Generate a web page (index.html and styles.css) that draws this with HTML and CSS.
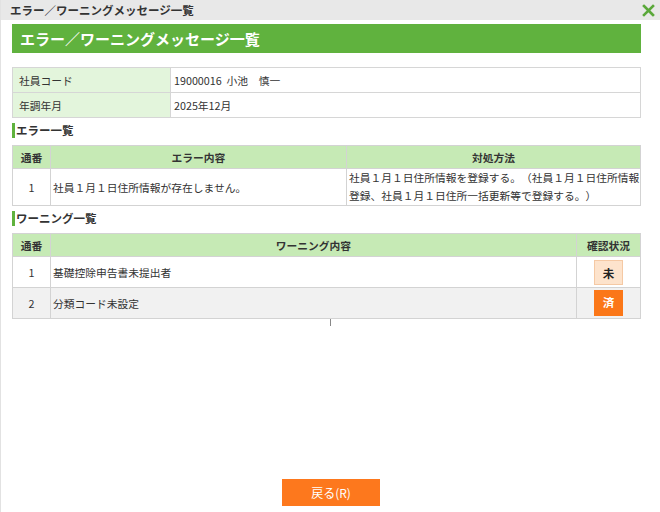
FILE: index.html
```html
<!DOCTYPE html>
<html lang="ja">
<head>
<meta charset="utf-8">
<title>エラー／ワーニングメッセージ一覧</title>
<link rel="stylesheet" href="styles.css">
</head>
<body>
<div class="window">
  <div class="titlebar">
    <span class="title">エラー／ワーニングメッセージ一覧</span>
    <svg class="close" width="13" height="13" viewBox="0 0 13 13"><path d="M2 2 L11 11 M11 2 L2 11" stroke="#5aa83a" stroke-width="2.6" stroke-linecap="square"/></svg>
  </div>
  <div class="content">
    <div class="pagehead">エラー／ワーニングメッセージ一覧</div>
    <table class="info">
      <tr><th>社員コード</th><td>19000016&nbsp;&nbsp;小池　慎一</td></tr>
      <tr><th>年調年月</th><td>2025年12月</td></tr>
    </table>
    <div class="section">エラー一覧</div>
    <table class="grid err">
      <colgroup><col class="c1"><col class="c2"><col></colgroup>
      <tr><th>通番</th><th>エラー内容</th><th>対処方法</th></tr>
      <tr class="r-err"><td class="num">1</td><td>社員１月１日住所情報が存在しません。</td><td class="fix">社員１月１日住所情報を登録する。（社員１月１日住所情報<br>登録、社員１月１日住所一括更新等で登録する。）</td></tr>
    </table>
    <div class="section">ワーニング一覧</div>
    <table class="grid warn">
      <colgroup><col class="c1"><col><col class="c3"></colgroup>
      <tr><th>通番</th><th>ワーニング内容</th><th>確認状況</th></tr>
      <tr class="r-w"><td class="num">1</td><td>基礎控除申告書未提出者</td><td class="st"><span class="badge mi">未</span></td></tr>
      <tr class="r-w alt"><td class="num">2</td><td>分類コード未設定</td><td class="st"><span class="badge zumi">済</span></td></tr>
    </table>
    <div class="tick"></div>
  </div>
  <div class="footer"><button class="back">戻る(R)</button></div>
</div>
</body>
</html>
```
FILE: styles.css
```css
html, body {
  margin: 0;
  padding: 0;
  background: #fff;
}
body {
  font-family: "Noto Sans CJK JP", "Noto Sans", sans-serif;
  font-size: 10.75px;
  color: #333;
  text-spacing-trim: space-all;
}
.window {
  width: 660px;
  height: 512px;
  box-sizing: border-box;
  border-left: 1px solid #e2e2e2;
  display: flex;
  flex-direction: column;
}
.titlebar {
  height: 20px;
  background: #e8e8e8;
  display: flex;
  align-items: center;
  justify-content: space-between;
  padding: 0 5px 0 9px;
  flex-shrink: 0;
}
.title {
  font-weight: bold;
  font-size: 11.5px;
  color: #333;
  line-height: 20px;
}
.close { display: block; }
.content {
  padding: 4px 0 0 11px;
  width: 629px;
}
.pagehead {
  height: 29px;
  background: #60b23e;
  color: #fff;
  font-weight: bold;
  font-size: 15px;
  line-height: 29px;
  padding-left: 8px;
}
table {
  border-collapse: collapse;
  width: 629px;
  table-layout: fixed;
}
.info {
  margin-top: 14px;
}
.info th, .info td {
  border: 1px solid #d6d6d6;
  height: 24px;
  padding: 0 3px;
  text-align: left;
  font-weight: normal;
}
.info th {
  width: 148px;
  padding-left: 6px;
  background: #e3f5dc;
}
.section {
  margin-top: 5px;
  height: 15px;
  line-height: 15px;
  border-left: 3px solid #5fb23d;
  padding-left: 1px;
  font-weight: bold;
  font-size: 11.5px;
}
.grid { margin-top: 7px; }
.grid th, .grid td {
  border: 1px solid #d3d3d3;
  padding: 0 2px;
}
.grid th {
  background: #c6eab5;
  height: 22px;
  font-weight: bold;
  text-align: center;
}
.grid col.c1 { width: 38px; }
.err col.c2 { width: 296px; }
.warn col.c3 { width: 64px; }
.num { text-align: center; }
.r-err td { height: 36px; }
.fix { line-height: 18px; padding: 0 1px; white-space: nowrap; }
.r-w td { height: 30px; }
.r-w.alt td { background: #f1f1f1; }
.st { text-align: center; }
.badge {
  display: inline-block;
  width: 29px;
  height: 25px;
  line-height: 25px;
  box-sizing: border-box;
  font-weight: bold;
  font-size: 11.5px;
  vertical-align: middle;
}
.badge.mi {
  background: #fde3cc;
  border: 1px solid #f5c9a4;
  color: #222;
}
.badge.zumi {
  background: #fb7718;
  color: #fff;
  height: 26px;
}
.tick {
  width: 1px;
  height: 7px;
  background: #888;
  margin-left: 318px;
}
.footer {
  margin-top: auto;
  padding-bottom: 6px;
  display: flex;
  justify-content: center;
}
.back {
  width: 98px;
  height: 27px;
  border: none;
  background: #fd781d;
  color: #fff;
  font-family: "Noto Sans CJK JP", "Noto Sans", sans-serif;
  font-size: 12px;
  padding: 0;
  margin-left: 1px;
}
```
